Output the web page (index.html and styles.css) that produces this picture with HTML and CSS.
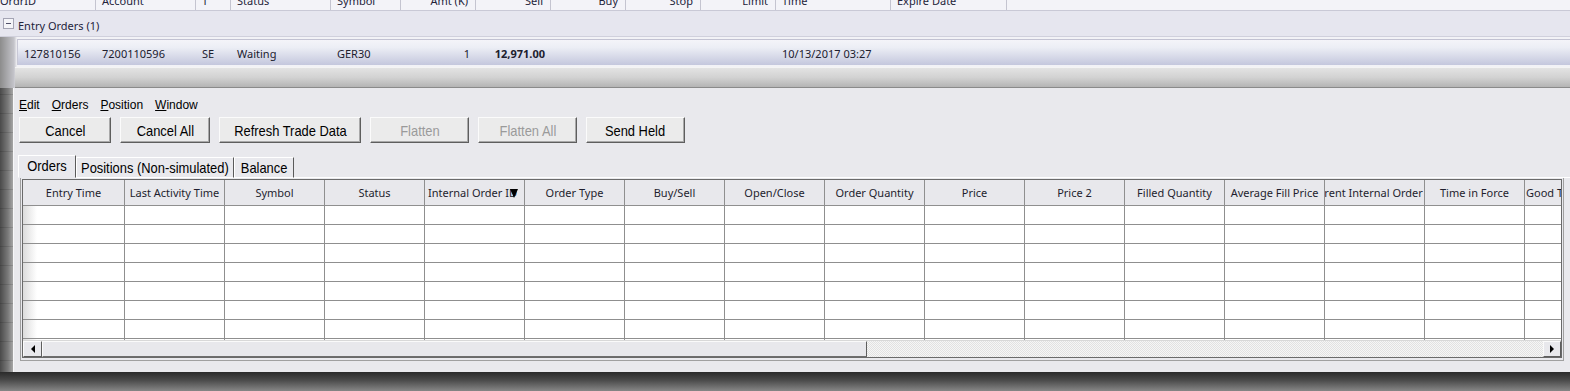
FILE: index.html
```html
<!DOCTYPE html>
<html lang="en">

<head>
    <meta charset="UTF-8">
    <meta name="viewport" content="width=device-width, initial-scale=1.0">
    <title>Trade Window</title>
    <link rel="stylesheet" href="styles.css">
</head>

<body>
    <!-- Janela de fundo: lista de ordens -->
    <div class="back">
        <div class="back-head">
            <div class="bh c-id first"><span>OrdrID</span></div>
            <div class="bh c-acc"><span>Account</span></div>
            <div class="bh c-t"><span>T</span></div>
            <div class="bh c-st"><span>Status</span></div>
            <div class="bh c-sym"><span>Symbol</span></div>
            <div class="bh c-num num"><span>Amt (K)</span></div>
            <div class="bh c-num num"><span>Sell</span></div>
            <div class="bh c-num num"><span>Buy</span></div>
            <div class="bh c-num num"><span>Stop</span></div>
            <div class="bh c-num num"><span>Limit</span></div>
            <div class="bh c-time"><span>Time</span></div>
            <div class="bh c-exp"><span>Expire Date</span></div>
        </div>
        <div class="back-group"><span class="toggle"></span>Entry Orders (1)</div>
        <div class="back-body">
            <div class="back-row">
                <div class="bc c-id-in">127810156</div>
                <div class="bc c-acc">7200110596</div>
                <div class="bc c-t">SE</div>
                <div class="bc c-st">Waiting</div>
                <div class="bc c-sym">GER30</div>
                <div class="bc c-num num">1</div>
                <div class="bc c-num num bold">12,971.00</div>
                <div class="bc c-num num"></div>
                <div class="bc c-num num"></div>
                <div class="bc c-num num"></div>
                <div class="bc c-time">10/13/2017 03:27</div>
                <div class="bc c-exp"></div>
            </div>
            <div class="back-gray"></div>
        </div>
    </div>

    <!-- Janela de ordens -->
    <div class="window">
        <div class="menu">
            <span><u>E</u>dit</span>
            <span><u>O</u>rders</span>
            <span><u>P</u>osition</span>
            <span><u>W</u>indow</span>
        </div>

        <div class="toolbar">
            <button class="btn w-cancel"><span>Cancel</span></button>
            <button class="btn w-cancel-all"><span>Cancel All</span></button>
            <button class="btn w-refresh"><span>Refresh Trade Data</span></button>
            <button class="btn w-flat off"><span>Flatten</span></button>
            <button class="btn w-flat off"><span>Flatten All</span></button>
            <button class="btn w-flat"><span>Send Held</span></button>
        </div>

        <div class="tabs">
            <div class="tab on t-orders"><span>Orders</span></div>
            <div class="tab t-pos"><span>Positions (Non-simulated)</span></div>
            <div class="tab t-bal"><span>Balance</span></div>
            <div class="tab-rest"></div>
        </div>

        <div class="panel">
            <div class="grid">
                <div class="grid-view">
                    <div class="grid-head">
                        <div class="hcell">Entry Time</div>
                        <div class="hcell">Last Activity Time</div>
                        <div class="hcell">Symbol</div>
                        <div class="hcell">Status</div>
                        <div class="hcell left sorted">Internal Order ID<span class="sort-arrow"></span></div>
                        <div class="hcell">Order Type</div>
                        <div class="hcell">Buy/Sell</div>
                        <div class="hcell">Open/Close</div>
                        <div class="hcell">Order Quantity</div>
                        <div class="hcell">Price</div>
                        <div class="hcell">Price 2</div>
                        <div class="hcell">Filled Quantity</div>
                        <div class="hcell">Average Fill Price</div>
                        <div class="hcell">Parent Internal Order ID</div>
                        <div class="hcell">Time in Force</div>
                        <div class="hcell left">Good Till Date</div>
                    </div>
                    <div id="gridBody"></div>
                </div>
                <div class="hscroll">
                    <div class="sb-btn"><span class="arrow-left"></span></div>
                    <div class="sb-thumb"></div>
                    <div class="sb-track"></div>
                    <div class="sb-btn"><span class="arrow-right"></span></div>
                </div>
            </div>
        </div>
    </div>

    <!-- Sombra abaixo da janela -->
    <div class="floor"></div>

    <script>
        // Linhas vazias da grade de ordens
        const gridBody = document.getElementById("gridBody");
        for (let r = 0; r < 8; r++) {
            const row = document.createElement("div");
            row.className = "grid-row";
            for (let c = 0; c < 16; c++) {
                const cell = document.createElement("div");
                cell.className = "cell";
                row.appendChild(cell);
            }
            gridBody.appendChild(row);
        }
    </script>
</body>

</html>
```

FILE: styles.css
```css
/* Reset */
* {
    margin: 0;
    padding: 0;
    box-sizing: border-box;
}

body {
    width: 1570px;
    height: 391px;
    overflow: hidden;
    font-family: "Noto Sans", sans-serif;
    font-size: 11px;
    color: #23233a;
    background:
        repeating-linear-gradient(to bottom, transparent 0 18px, rgba(0, 0, 0, 0.12) 18px 19px),
        linear-gradient(to right, #4a4a4a, #7a7a7a 8px, #a6a6a6 13px);
}

/* Janela de fundo */
.back {
    height: 88px;
}

.back-head {
    display: flex;
    height: 11px;
    background: #f3f3f8;
    border-bottom: 1px solid #c9c9d6;
}

.bh {
    height: 10px;
    overflow: hidden;
    border-right: 1px solid #c4c4d0;
    padding: 0 6px;
    white-space: nowrap;
}

.bh span {
    display: block;
    line-height: 10px;
    margin-top: -4px;
}

.bh.first {
    padding-left: 0;
}

.num {
    text-align: right;
    padding-right: 7px;
}

.c-id { width: 96px; }
.c-id-in { width: 79px; }
.c-acc { width: 100px; }
.c-t { width: 35px; }
.c-st { width: 100px; }
.c-sym { width: 70px; }
.c-num { width: 75px; }
.c-time { width: 115px; }
.c-exp { width: 116px; }

.back-group {
    height: 26px;
    display: flex;
    align-items: center;
    background: #e6e6ef;
    border-bottom: 1px solid #d0d0dc;
    padding-left: 3px;
    padding-top: 3px;
}

.toggle {
    width: 11px;
    height: 11px;
    border: 1px solid #a4a4b4;
    background: #f4f4f8;
    margin-right: 4px;
    margin-top: -3px;
    display: flex;
    align-items: center;
    justify-content: center;
}

.toggle::before {
    content: "";
    width: 5px;
    height: 1px;
    background: #50506a;
}

.back-body {
    height: 51px;
    background: linear-gradient(to right, #8c8c8c 0, #c4c4ca 14px, #f2f2f6 17px);
    padding-top: 2px;
}

.back-row {
    display: flex;
    margin-left: 17px;
    height: 26px;
    border-top: 1px solid #c2c2d2;
    border-left: 1px solid #c8c8d6;
    background: linear-gradient(#f4f4f9 0%, #eceef5 30%, #c4c7dd 100%);
}

.bc {
    line-height: 27px;
    padding: 0 6px;
    white-space: nowrap;
    color: #20202e;
}

.back-row .c-id-in {
    width: 78px;
}

.bold {
    font-weight: 700;
}

.back-gray {
    margin: 2px 0 0 15px;
    height: 21px;
    background: linear-gradient(#e3e3e3, #d2d2d2 50%, #b4b4b4);
    border-top: 1px solid #f4f4f4;
    border-bottom: 1px solid #8a8a8a;
}

/* Janela principal */
.window {
    margin-left: 13px;
    height: 284px;
    background: #e9e9ed;
    border-left: 1px solid #f7f7f9;
    padding: 9px 0 0 5px;
    font-family: "Liberation Sans", Arial, sans-serif;
    color: #000;
}

.menu {
    display: flex;
    gap: 12px;
    height: 16px;
    line-height: 16px;
    font-size: 12px;
}

.toolbar {
    display: flex;
    gap: 9px;
    margin-top: 4px;
}

.btn {
    height: 26px;
    border: 1px solid;
    border-color: #fbfbfb #5e5e5e #5e5e5e #fbfbfb;
    box-shadow: inset -1px -1px 0 #a9a9a9;
    background: #ebebeb;
    font-family: inherit;
    color: #000;
    display: flex;
    align-items: center;
    justify-content: center;
    white-space: nowrap;
}

/* Texto estreito, como a fonte condensada do original */
.btn span,
.tab span {
    display: inline-block;
    font-size: 15px;
    transform: scaleX(0.86);
}

.btn.off {
    color: #9a9a9a;
}

.w-cancel { width: 92px; }
.w-cancel-all { width: 90px; }
.w-refresh { width: 142px; }
.w-flat { width: 99px; }

/* Abas */
.tabs {
    display: flex;
    align-items: flex-end;
    margin-top: 12px;
    margin-left: -1px;
    height: 23px;
}

.tab {
    height: 21px;
    border: 1px solid;
    border-color: #ffffff #5a5a5a #ffffff #ffffff;
    background: #e9e9ed;
    display: flex;
    align-items: center;
    justify-content: center;
    white-space: nowrap;
}

.tab.on {
    height: 23px;
    border-bottom-color: #e9e9ed;
    padding-bottom: 2px;
}

.t-orders { width: 58px; }
.t-pos { width: 158px; }
.t-bal { width: 60px; }

.tab-rest {
    flex: 1;
    border-bottom: 1px solid #ffffff;
}

.panel {
    margin: 0 6px 0 1px;
    border: 1px solid #a0a0a0;
    border-top: none;
    padding: 1px 1px 2px 1px;
}

.grid {
    border: 1px solid #6a6a6a;
    background: #fff;
    font-family: "Noto Sans", sans-serif;
    font-size: 11px;
}

.grid-view {
    height: 160px;
    overflow: hidden;
}

.grid-head,
.grid-row {
    display: flex;
}

.hcell,
.cell {
    flex: 0 0 100px;
    border-right: 1px solid #8f8f8f;
    border-bottom: 1px solid #8f8f8f;
}

.hcell:first-child,
.cell:first-child {
    flex-basis: 102px;
}

.hcell {
    height: 26px;
    background: #e8e8ec;
    display: flex;
    align-items: center;
    justify-content: center;
    overflow: hidden;
    white-space: nowrap;
    color: #1e1e2e;
    position: relative;
}

.hcell.left {
    justify-content: flex-start;
    padding-left: 3px;
}

.hcell:last-child {
    padding-left: 1px;
}

.sort-arrow {
    position: absolute;
    right: 6px;
    top: 9px;
    width: 0;
    height: 0;
    border-left: 4px solid transparent;
    border-right: 4px solid transparent;
    border-top: 9px solid #000;
}

.cell {
    height: 19px;
    background: #fff;
}

.cell:first-child {
    background: linear-gradient(to right, #dcdcdc, #ffffff 14px);
}

/* Barra de rolagem */
.hscroll {
    display: flex;
    height: 17px;
    border-top: 1px solid #d8d8d8;
}

.sb-btn {
    width: 19px;
    border: 1px solid;
    border-color: #fafafa #5e5e5e #5e5e5e #fafafa;
    background: #e8e8ec;
    display: flex;
    align-items: center;
    justify-content: center;
}

.sb-btn:last-child {
    width: 18px;
}

.arrow-left {
    border-top: 4px solid transparent;
    border-bottom: 4px solid transparent;
    border-right: 4px solid #000;
}

.arrow-right {
    border-top: 4px solid transparent;
    border-bottom: 4px solid transparent;
    border-left: 4px solid #000;
}

.sb-thumb {
    width: 825px;
    background: #e8e8ec;
    border: 1px solid;
    border-color: #fafafa #5e5e5e #6e6e6e #fafafa;
}

.sb-track {
    flex: 1;
    background: repeating-conic-gradient(#f6f6f6 0 25%, #e2e2e2 0 50%) 0 0 / 2px 2px;
}

/* Sombra inferior */
.floor {
    height: 19px;
    background: linear-gradient(#2a2a2a, #474747 40%, #868686);
}
```
